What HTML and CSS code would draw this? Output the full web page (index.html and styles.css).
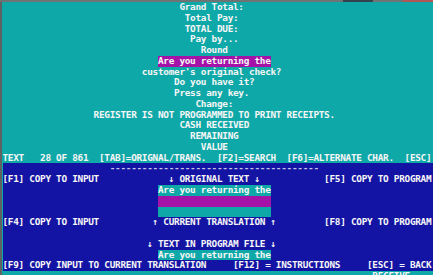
FILE: index.html
```html
<!DOCTYPE html>
<html lang="en">
<head>
    <meta charset="UTF-8">
    <meta name="viewport" content="width=device-width, initial-scale=1.0">
    <title>Translation Editor</title>
    <link rel="stylesheet" href="styles.css">
</head>
<body>
    <!-- Window frame top edge -->
    <div class="frame-top">
        <div class="seg seg-gray" style="width: 343px"></div>
        <div class="seg seg-dark" style="width: 30px"></div>
        <div class="seg seg-gray" style="width: 30px"></div>
        <div class="seg seg-red"></div>
    </div>

    <div class="screen">
        <!-- Program output (teal area) -->
        <div class="row teal">                                 Grand Total:</div>
        <div class="row teal">                                  Total Pay:</div>
        <div class="row teal">                                  TOTAL DUE:</div>
        <div class="row teal">                                   Pay by...</div>
        <div class="row teal">                                     Round</div>
        <div class="row teal">                             <span class="cell magenta">Are you returning the</span></div>
        <div class="row teal">                          customer's original check?</div>
        <div class="row teal">                                Do you have it?</div>
        <div class="row teal">                                Press any key.</div>
        <div class="row teal">                                    Change:</div>
        <div class="row teal">                 REGISTER IS NOT PROGRAMMED TO PRINT RECEIPTS.</div>
        <div class="row teal">                                 CASH RECEIVED</div>
        <div class="row teal">                                   REMAINING</div>
        <div class="row teal">                                     VALUE</div>

        <!-- Status line -->
        <div class="row teal">TEXT   28 OF 861  [TAB]=ORIGNAL/TRANS.  [F2]=SEARCH  [F6]=ALTERNATE CHAR.  [ESC]</div>

        <!-- Editor panel (blue area) -->
        <div class="row blue"><span class="dashes">                    ---------------------------------------</span></div>
        <div class="row blue">[F1] COPY TO INPUT             ↓ ORIGINAL TEXT ↓            [F5] COPY TO PROGRAM</div>
        <div class="row blue">                             <span class="cell teal">Are you returning the</span></div>
        <div class="row blue">                             <span class="cell magenta">                     </span></div>
        <div class="row blue">                             <span class="cell teal">                     </span></div>
        <div class="row blue">[F4] COPY TO INPUT          ↑ CURRENT TRANSLATION ↑         [F8] COPY TO PROGRAM</div>
        <div class="row blue"> </div>
        <div class="row blue">                           ↓ TEXT IN PROGRAM FILE ↓</div>
        <div class="row blue">                             <span class="cell teal">Are you returning the</span></div>
        <div class="row blue">[F9] COPY INPUT TO CURRENT TRANSLATION     [F12] = INSTRUCTIONS     [ESC] = BACK</div>

        <!-- Next line of the screen, cut off by the window -->
        <div class="row teal last">                                                                     RECEIVE</div>
    </div>
</body>
</html>
```

FILE: styles.css
```css
body {
    margin: 0;
    background-color: #0fa8a8;
    overflow: hidden;
}
.frame-top {
    display: flex;
    height: 2px;
}
.seg {
    height: 2px;
}
.seg-gray {
    background-color: #6e7474;
}
.seg-dark {
    background-color: #34424e;
}
.seg-red {
    flex: 1;
    background-color: #b05656;
}
.screen {
    border-left: 2px solid #5e6262;
    padding-left: 0.5px;
    height: 273px;
    overflow: hidden;
}
.row {
    height: 10.78px;
    line-height: 10.78px;
    white-space: pre;
    font-family: "DejaVu Sans Mono", "Liberation Mono", monospace;
    font-weight: bold;
    font-size: 9.4px;
    letter-spacing: -0.284px;
    color: #f6f6f6;
    overflow: hidden;
}
.teal {
    background-color: #0fa8a8;
}
.blue {
    background-color: #1414a4;
}
.magenta {
    background-color: #a412a8;
}
.cell {
    display: inline-block;
    height: 10.78px;
    vertical-align: top;
}
.dashes {
    color: #c4c4e4;
}
.last {
    height: 4px;
}
```
